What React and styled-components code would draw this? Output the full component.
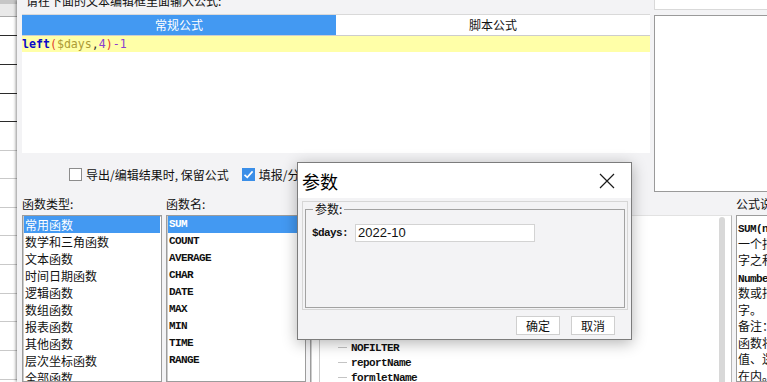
import styled, { createGlobalStyle } from "styled-components";

const GlobalStyle = createGlobalStyle`
  html, body {
    margin: 0;
    padding: 0;
  }
  body {
    width: 767px;
    height: 382px;
    overflow: hidden;
    background: #f3f3f5;
    font-family: "Noto Sans CJK SC", "Noto Sans", sans-serif;
    font-size: 12px;
    color: #111;
  }
`;

const sheetRows = [18, 28, 28, 27, 28, 27, 28, 27, 28, 28, 27, 28, 28];

const typeItems = [
	"常用函数",
	"数学和三角函数",
	"文本函数",
	"时间日期函数",
	"逻辑函数",
	"数组函数",
	"报表函数",
	"其他函数",
	"层次坐标函数",
	"全部函数",
];

const nameItems = ["SUM", "COUNT", "AVERAGE", "CHAR", "DATE", "MAX", "MIN", "TIME", "RANGE"];

const treeItems = [
	{ text: "参数", level: 0 },
	{ text: "$days", level: 1 },
	{ text: "内置参数", level: 0 },
	{ text: "$fine_username", level: 1 },
	{ text: "$fine_role", level: 1 },
	{ text: "$fine_position", level: 1 },
	{ text: "$sessionID", level: 1 },
	{ text: "servletURL", level: 1 },
	{ text: "NOFILTER", level: 1 },
	{ text: "reportName", level: 1 },
	{ text: "formletName", level: 1 },
];

const descLines = [
	{ mono: "SUM(number1,number2,…):", text: "求" },
	{ text: "一个指定单元格区域中所有数" },
	{ text: "字之和。" },
	{ mono: "Number1,number2,…:", text: "1到30个参" },
	{ text: "数或指定单元格区域中所有数" },
	{ text: "字。" },
	{ text: "备注：" },
	{ text: "函数将直接键入参数中的数" },
	{ text: "值、逻辑值及文本表达式计算" },
	{ text: "在内。若参数是数组或引用，" },
	{ text: "则只有数组或单元格引用中的" },
];

const CheckIcon = () => (
	<svg width="11" height="11" viewBox="0 0 11 11">
		<path d="M1.5 5.8 L4.3 8.4 L9.6 2.4" fill="none" stroke="#fff" strokeWidth="1.6" />
	</svg>
);

const CloseIcon = () => (
	<svg width="16" height="16" viewBox="0 0 16 16">
		<path d="M1 1 L15 15 M15 1 L1 15" stroke="#1a1a1a" strokeWidth="1.2" />
	</svg>
);

const App = () => {
	return (
		<>
			<GlobalStyle />
			<Page>
				<Sheet>
					<SheetHead />
					{sheetRows.map((h, i) => (
						<SheetRow key={i} $h={h} $dark={i < 4} />
					))}
				</Sheet>
				<Main>
					<TopGrid>
						<EditorCol>
							<PromptLabel>请在下面的文本编辑框里面输入公式:</PromptLabel>
							<TabBar>
								<Tab $active>常规公式</Tab>
								<Tab>脚本公式</Tab>
							</TabBar>
							<Editor>
								<CodeLine>
									<Tok $c="#0a0ac8" $bold>left</Tok>
									<Tok $c="#e23a2a">(</Tok>
									<Tok $c="#ad9b35">$days</Tok>
									<Tok $c="#333">,</Tok>
									<Tok $c="#8b3fd0">4</Tok>
									<Tok $c="#e23a2a">)</Tok>
									<Tok $c="#8b3fd0">-1</Tok>
								</CodeLine>
							</Editor>
							<CheckRow>
								<CheckItem>
									<CheckBox />
									导出/编辑结果时, 保留公式
								</CheckItem>
								<CheckItem>
									<CheckBox $checked>
										<CheckIcon />
									</CheckBox>
									填报/分页预览时, 保留公式
								</CheckItem>
							</CheckRow>
						</EditorCol>
						<RightCol>
							<TopStub />
							<PreviewBox />
						</RightCol>
					</TopGrid>

					<BottomGrid>
						<ColLabel>函数类型:</ColLabel>
						<ColLabel>函数名:</ColLabel>
						<ColLabel />
						<ColLabel>公式说明:</ColLabel>

						<ListBox>
							{typeItems.map((t, i) => (
								<ListItem key={t} $selected={i === 0}>
									{t}
								</ListItem>
							))}
						</ListBox>
						<ListBox>
							{nameItems.map((t, i) => (
								<NameItem key={t} $selected={i === 0}>
									{t}
								</NameItem>
							))}
						</ListBox>
						<TreePanel>
							<TreeBody>
								{treeItems.map((t) => (
									<TreeItem key={t.text} $level={t.level}>
										<Tick />
										{t.text}
									</TreeItem>
								))}
							</TreeBody>
							<ScrollTrack>
								<ScrollThumb />
							</ScrollTrack>
						</TreePanel>
						<DescBox>
							{descLines.map((l, i) => (
								<DescLine key={i}>
									{l.mono && <Mono>{l.mono}</Mono>}
									{l.text}
								</DescLine>
							))}
						</DescBox>
					</BottomGrid>

					<Dialog>
						<TitleBar>
							参数
							<CloseIcon />
						</TitleBar>
						<DialogBody>
							<Group>
								<Fieldset>
									<Legend>参数:</Legend>
									<ParamRow>
										<ParamName>$days:</ParamName>
										<ParamInput>2022-10</ParamInput>
									</ParamRow>
								</Fieldset>
							</Group>
							<ButtonRow>
								<Button>确定</Button>
								<Button>取消</Button>
							</ButtonRow>
						</DialogBody>
					</Dialog>
				</Main>
			</Page>
		</>
	);
};

export default App;

const Page = styled.div`
	display: flex;
	width: 767px;
	height: 382px;
	overflow: hidden;
`;

const Sheet = styled.div`
	width: 17px;
	flex: none;
	background: #fff;
	display: flex;
	flex-direction: column;
`;

const SheetHead = styled.div`
	flex: none;
	height: 16px;
	background: linear-gradient(#c6c6c6 0 4px, #e9e9e9 4px);
	border-bottom: 1px solid #aaa;
`;

const SheetRow = styled.div`
	flex: none;
	height: ${(p) => p.$h}px;
	border-bottom: 1px solid ${(p) => (p.$dark ? "#2b2b2b" : "#c9c9c9")};
`;

const Main = styled.div`
	position: relative;
	flex: 1;
	min-width: 0;
	background: #f3f3f5;
	box-shadow: -1px 0 3px rgba(0, 0, 0, 0.45);
	padding-left: 5px;
	display: flex;
	flex-direction: column;
	overflow: hidden;
`;

const TopGrid = styled.div`
	display: grid;
	grid-template-columns: 628px 1fr;
	column-gap: 4px;
	flex: none;
`;

const EditorCol = styled.div`
	display: flex;
	flex-direction: column;
`;

const PromptLabel = styled.div`
	margin-top: -7px;
	height: 21px;
	line-height: 16px;
	padding-left: 4px;
	white-space: nowrap;
`;

const TabBar = styled.div`
	display: flex;
	height: 22px;
	box-sizing: border-box;
	border-top: 1px solid #d9d9d9;
	border-bottom: 1px solid #cdcdcd;
`;

const Tab = styled.div`
	flex: ${(p) => (p.$active ? "0 0 314px" : "1")};
	background: ${(p) => (p.$active ? "#4399f2" : "#fff")};
	color: ${(p) => (p.$active ? "#fff" : "#111")};
	text-align: center;
	line-height: 20px;
`;

const Editor = styled.div`
	height: 117px;
	background: #fff;
`;

const CodeLine = styled.div`
	height: 16px;
	line-height: 16px;
	background: #ffffa8;
	font-family: "DejaVu Sans Mono", "Liberation Mono", monospace;
	font-size: 11.6px;
	white-space: pre;
`;

const Tok = styled.span`
	color: ${(p) => p.$c};
	font-weight: ${(p) => (p.$bold ? "bold" : "normal")};
`;

const CheckRow = styled.div`
	height: 39px;
	box-sizing: border-box;
	padding: 15px 0 0 47px;
	display: flex;
	align-items: flex-start;
	gap: 13px;
	white-space: nowrap;
`;

const CheckItem = styled.div`
	display: flex;
	align-items: center;
	gap: 4px;
	height: 13px;
	line-height: 13px;
`;

const CheckBox = styled.div`
	width: 13px;
	height: 13px;
	box-sizing: border-box;
	border: 1px solid ${(p) => (p.$checked ? "#3a8ee8" : "#8c8c8c")};
	background: ${(p) => (p.$checked ? "#3a8ee8" : "#fff")};
	display: flex;
	align-items: center;
	justify-content: center;
`;

const RightCol = styled.div`
	display: flex;
	flex-direction: column;
`;

const TopStub = styled.div`
	height: 10px;
	flex: none;
	box-sizing: border-box;
	background: #fff;
	border-left: 1px solid #d9d9d9;
	border-bottom: 1px solid #d9d9d9;
`;

const PreviewBox = styled.div`
	flex: 1;
	margin-top: 5px;
	background: #fff;
	border: 1px solid #9a9a9a;
	border-right: none;
`;

const BottomGrid = styled.div`
	flex: 1;
	min-height: 0;
	display: grid;
	grid-template-columns: 140px 140px 422px 200px;
	grid-template-rows: 23px 1fr;
	column-gap: 4px;
`;

const ColLabel = styled.div`
	line-height: 23px;
	white-space: nowrap;
`;

const ListBox = styled.div`
	background: #fff;
	border: 1px solid #9c9c9c;
	box-shadow: inset 1px 1px 0 #cdcdcd;
	padding: 0 1px;
	overflow: hidden;
`;

const ListItem = styled.div`
	height: 17px;
	line-height: 17px;
	padding-left: 1px;
	white-space: nowrap;
	background: ${(p) => (p.$selected ? "#4399f2" : "transparent")};
	color: ${(p) => (p.$selected ? "#fff" : "#111")};
`;

const monoFont = `
	font-family: "Liberation Mono", "DejaVu Sans Mono", monospace;
	font-size: 11px;
	font-weight: bold;
	letter-spacing: -0.6px;
`;

const NameItem = styled(ListItem)`
	${monoFont}
`;

const TreePanel = styled.div`
	display: flex;
	background: #fff;
	border-top: 1px solid #e2e2e2;
	border-left: 1px solid #9c9c9c;
	border-right: 1px solid #b5b5b5;
	box-shadow: inset 1px 0 0 #cdcdcd;
	overflow: hidden;
`;

const TreeBody = styled.div`
	flex: 1;
	padding-top: 4px;
	background: linear-gradient(#cbcbcb, #cbcbcb) 8px 0 / 1px 100% no-repeat;
`;

const TreeItem = styled.div`
	display: flex;
	align-items: center;
	height: 15px;
	padding-left: ${(p) => (p.$level ? 27 : 9)}px;
	white-space: nowrap;
	${monoFont}
`;

const Tick = styled.span`
	width: 9px;
	height: 1px;
	margin-right: 4px;
	background: #c4c4c4;
	flex: none;
`;

const ScrollTrack = styled.div`
	width: 10px;
	flex: none;
	padding: 1px 2px 0 0;
`;

const ScrollThumb = styled.div`
	width: 6px;
	height: 100%;
	background: #d8d8d8;
	border-radius: 3px 3px 0 0;
`;

const DescBox = styled.div`
	background: #fff;
	border: 1px solid #9c9c9c;
	padding: 3px 0 0 1px;
	line-height: 16.5px;
	white-space: nowrap;
	overflow: hidden;
`;

const DescLine = styled.div`
	height: 16.5px;
`;

const Mono = styled.span`
	${monoFont}
`;

const Dialog = styled.div`
	position: absolute;
	left: 280px;
	top: 162px;
	width: 335px;
	box-sizing: border-box;
	border: 1px solid #7c7c7c;
	background: #f3f3f5;
	box-shadow: 0 3px 14px rgba(0, 0, 0, 0.3);
`;

const TitleBar = styled.div`
	height: 35px;
	background: #fff;
	display: flex;
	align-items: center;
	justify-content: space-between;
	padding: 0 16px 0 4px;
	font-size: 18px;
	color: #000;
`;

const DialogBody = styled.div`
	padding: 3px 3px 0 4px;
`;

const Group = styled.div`
	border: 1px solid #d6d6d6;
	padding: 0 2px 1px 2px;
`;

const Fieldset = styled.fieldset`
	margin: 0;
	padding: 8px 6px 0;
	border: 1px solid #a2a2a2;
	height: 106px;
	box-sizing: border-box;
	min-width: 0;
`;

const Legend = styled.legend`
	padding: 0 2px;
	margin-left: 1px;
	font-size: 12px;
	line-height: 14px;
`;

const ParamRow = styled.div`
	display: flex;
	align-items: center;
	gap: 7px;
`;

const ParamName = styled.span`
	${monoFont}
`;

const ParamInput = styled.div`
	width: 180px;
	height: 18px;
	box-sizing: border-box;
	border: 1px solid #d3d3d3;
	background: #fff;
	padding-left: 2px;
	font-family: "Liberation Sans", Arial, sans-serif;
	font-size: 13px;
	line-height: 16px;
	color: #111;
`;

const ButtonRow = styled.div`
	display: flex;
	justify-content: flex-end;
	gap: 11px;
	padding: 6px 13px 4px 0;
`;

const Button = styled.div`
	width: 44px;
	height: 19px;
	box-sizing: border-box;
	border: 1px solid #cfcfcf;
	background: #fff;
	text-align: center;
	line-height: 17px;
	font-size: 12px;
`;
